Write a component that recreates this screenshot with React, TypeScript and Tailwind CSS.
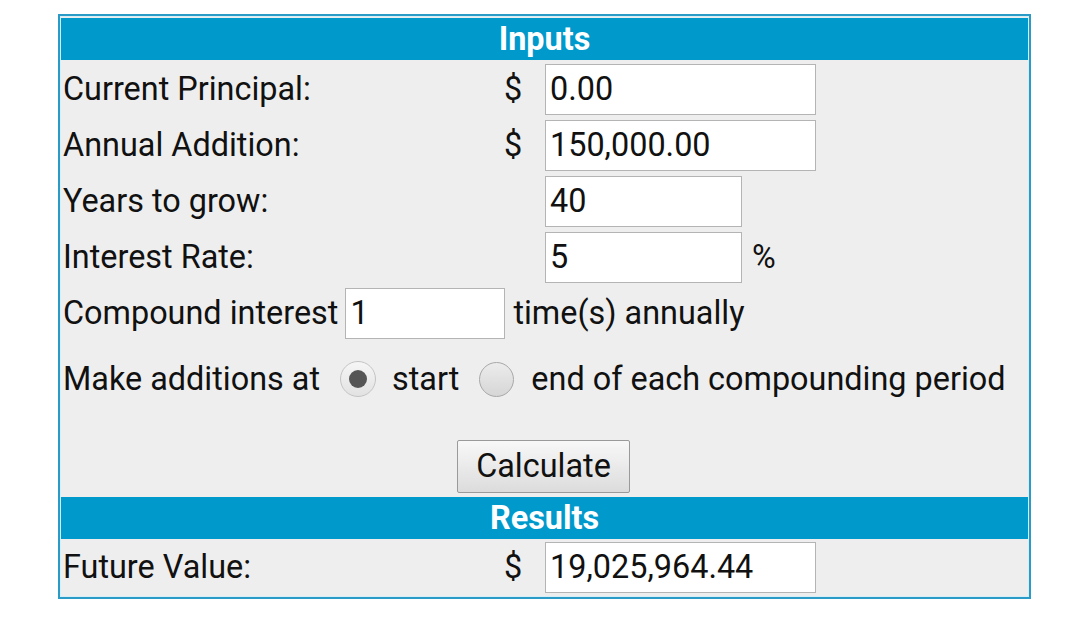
import React from 'react';

function Field({ value, width }: { value: string; width: string }) {
    return (
        <div
            className={`${width} h-[51px] bg-white border border-[#b4b4b4] pl-[4px] flex items-center text-[32.4px] leading-none`}
        >
            {value}
        </div>
    );
}

function Radio({ checked }: { checked?: boolean }) {
    return checked ? (
        <span className="inline-flex items-center justify-center w-[36px] h-[36px] rounded-full border border-[#c4c4c4] bg-gradient-to-b from-[#f6f6f6] to-[#e2e2e2]">
            <span className="w-[18px] h-[18px] rounded-full bg-[#555555]" />
        </span>
    ) : (
        <span className="inline-block w-[35px] h-[35px] rounded-full border border-[#a8a8a8] bg-gradient-to-b from-[#ececec] to-[#d6d6d6]" />
    );
}

function Header({ title }: { title: string }) {
    return (
        <div className="h-[42px] bg-[#0099cc] text-white font-bold text-[32.4px] flex items-center justify-center">
            {title}
        </div>
    );
}

function Row({
    label,
    dollar,
    value,
    width,
    suffix,
}: {
    label: string;
    dollar?: boolean;
    value: string;
    width: string;
    suffix?: string;
}) {
    return (
        <div className="h-[56px] flex items-center">
            <div className="w-[430px] pl-[2px]">{label}</div>
            <div className="w-[44px] text-center">{dollar ? '$' : ''}</div>
            <div className="ml-[10px] flex items-center">
                <Field value={value} width={width} />
                {suffix && <span className="ml-[10px]">{suffix}</span>}
            </div>
        </div>
    );
}

export default function App() {
    return (
        <div
            className="w-[1080px] h-[626px] bg-white pt-[14px] pl-[58px] text-[#111111] text-[32.4px] leading-none"
            style={{ fontFamily: 'Roboto, "Noto Sans", sans-serif' }}
        >
            <div className="w-[973px] border-2 border-[#2a9bc6]">
                <div className="border border-[#d6eef6] bg-[#eeeeee] pt-px">
                    <Header title="Inputs" />
                    <div className="pt-px">
                        <Row label="Current Principal:" dollar value="0.00" width="w-[271px]" />
                        <Row label="Annual Addition:" dollar value="150,000.00" width="w-[271px]" />
                        <Row label="Years to grow:" value="40" width="w-[197px]" />
                        <Row label="Interest Rate:" value="5" width="w-[197px]" suffix="%" />
                        <div className="h-[56px] flex items-center pl-[2px]">
                            <span>Compound interest</span>
                            <div className="ml-[7px]">
                                <Field value="1" width="w-[160px]" />
                            </div>
                            <span className="ml-[8px]">time(s) annually</span>
                        </div>
                        <div className="h-[76px] flex items-center pl-[2px]">
                            <span>Make additions at</span>
                            <span className="ml-[20px] flex items-center">
                                <Radio checked />
                            </span>
                            <span className="ml-[16px]">start</span>
                            <span className="ml-[20px] flex items-center">
                                <Radio />
                            </span>
                            <span className="ml-[17px]">end of each compounding period</span>
                        </div>
                        <div className="h-[78px] flex items-center justify-center pt-[20px]">
                            <button className="w-[173px] h-[53px] border border-[#9a9a9a] rounded-[2px] bg-gradient-to-b from-[#f8f8f8] to-[#dcdcdc] text-[32.4px] ml-[-2px]">
                                Calculate
                            </button>
                        </div>
                    </div>
                    <div className="mt-[2px]">
                        <Header title="Results" />
                    </div>
                    <div className="pb-px">
                        <Row label="Future Value:" dollar value="19,025,964.44" width="w-[271px]" />
                    </div>
                </div>
            </div>
        </div>
    );
}
